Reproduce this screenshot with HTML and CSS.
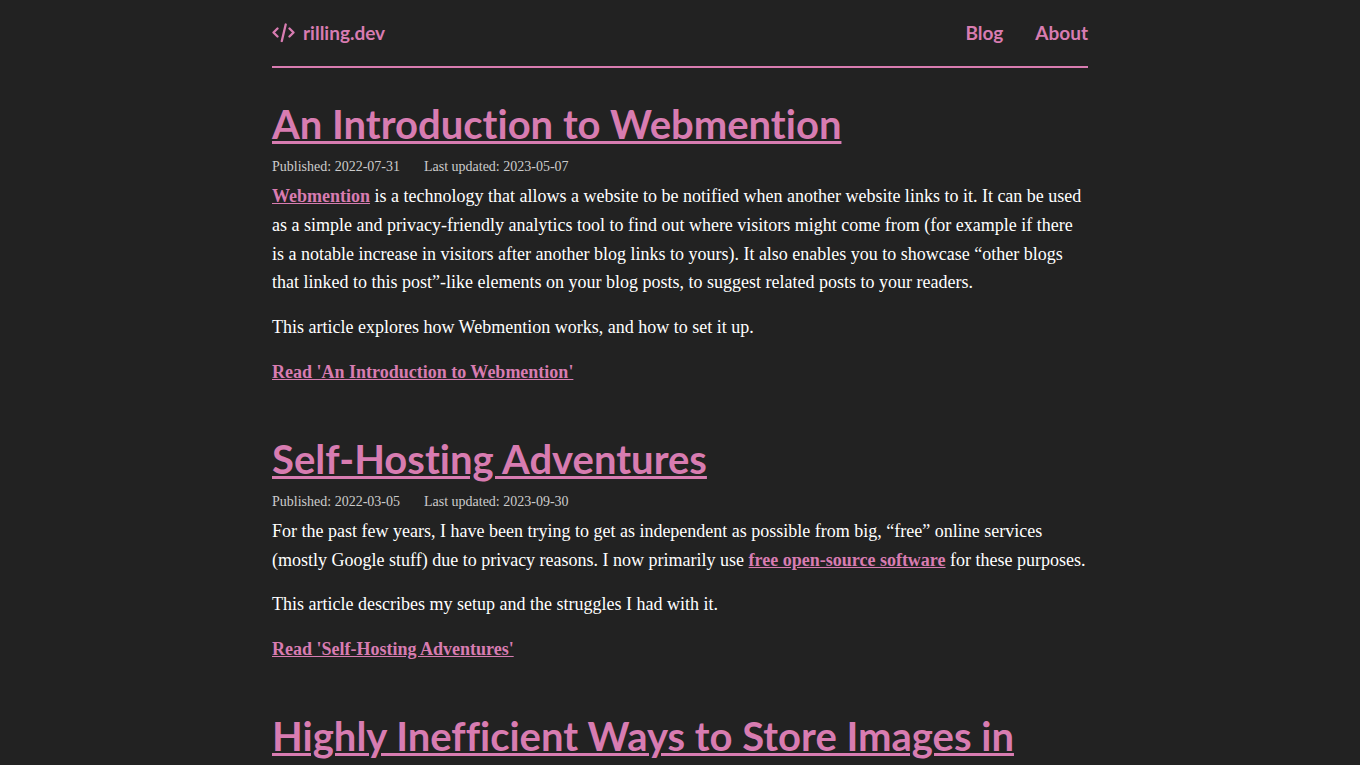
FILE: index.html
```html
<!DOCTYPE html>
<html lang="en">
<head>
<meta charset="utf-8">
<meta name="viewport" content="width=device-width, initial-scale=1">
<title>rilling.dev</title>
<link rel="stylesheet" href="styles.css">
</head>
<body>
<div class="page">
  <header class="site-header">
    <a class="brand" href="/">
      <svg class="brand-icon" viewBox="0 0 23 20" stroke-width="2.3" aria-hidden="true"><path d="M5.500 5.500 1.500 9.500l4 4M17.500 5.500l4 4-4 4M13.700 1.500 9.800 18"/></svg>
      <span>rilling.dev</span>
    </a>
    <nav class="site-nav">
      <a href="/blog">Blog</a>
      <a href="/about">About</a>
    </nav>
  </header>
  <main class="posts">
    <article class="post">
      <h1 class="post-title"><a href="#webmention">An Introduction to Webmention</a></h1>
      <div class="post-meta"><span>Published: <time>2022-07-31</time></span><span>Last updated: <time>2023-05-07</time></span></div>
      <div class="post-body">
        <p><a href="#w">Webmention</a> is a technology that allows a website to be notified when another website links to it. It can be used as a simple and privacy-friendly analytics tool to find out where visitors might come from (for example if there is a notable increase in visitors after another blog links to yours). It also enables you to showcase “other blogs that linked to this post”-like elements on your blog posts, to suggest related posts to your readers.</p>
        <p>This article explores how Webmention works, and how to set it up.</p>
        <p><a href="#webmention">Read 'An Introduction to Webmention'</a></p>
      </div>
    </article>
    <article class="post">
      <h1 class="post-title"><a href="#hosting">Self-Hosting Adventures</a></h1>
      <div class="post-meta"><span>Published: <time>2022-03-05</time></span><span>Last updated: <time>2023-09-30</time></span></div>
      <div class="post-body">
        <p>For the past few years, I have been trying to get as independent as possible from big, “free” online services (mostly Google stuff) due to privacy reasons. I now primarily use <a href="#foss">free open-source software</a> for these purposes.</p>
        <p>This article describes my setup and the struggles I had with it.</p>
        <p><a href="#hosting">Read 'Self-Hosting Adventures'</a></p>
      </div>
    </article>
    <article class="post">
      <h1 class="post-title"><a href="#images">Highly Inefficient Ways to Store Images in</a></h1>
    </article>
  </main>
</div>
</body>
</html>
```
FILE: styles.css
```css
* { box-sizing: border-box; }
body {
  margin: 0;
  background: #222;
  color: #fff;
  font-family: "Liberation Serif", "Times New Roman", serif;
  font-size: 18px;
  line-height: 1.6;
}
a { color: #d87cb1; font-weight: 700; }
.page { width: 60%; margin: 0 auto; }
.site-header {
  display: flex;
  justify-content: space-between;
  align-items: center;
  height: 68px;
  border-bottom: 2px solid #d87cb1;
  font-family: Lato, "Noto Sans", sans-serif;
  font-size: 19px;
  font-variant-ligatures: none;
}
.site-header a { text-decoration: none; font-weight: 700; }
.brand { display: flex; align-items: center; gap: 8px; }
.brand-icon {
  width: 23px;
  height: 20px;
  fill: none;
  stroke: currentColor;
  stroke-linecap: round;
  stroke-linejoin: round;
}
.site-nav { display: flex; gap: 32px; }
.posts { display: grid; gap: 48px; padding-top: 32px; }
.post-title {
  margin: 0;
  font-family: Lato, "Noto Sans", sans-serif;
  font-size: 40px;
  line-height: 48px;
  font-variant-ligatures: none;
}
.post-title a { font-weight: 700; text-decoration-thickness: 3px; text-underline-offset: 2px; }
.post-meta {
  display: flex;
  gap: 24px;
  margin: 8px 0 4px;
  color: #ccc;
  font-size: 14px;
  line-height: 22px;
}
.post-body { display: grid; gap: 16px; }
.post-body p { margin: 0; }
```
